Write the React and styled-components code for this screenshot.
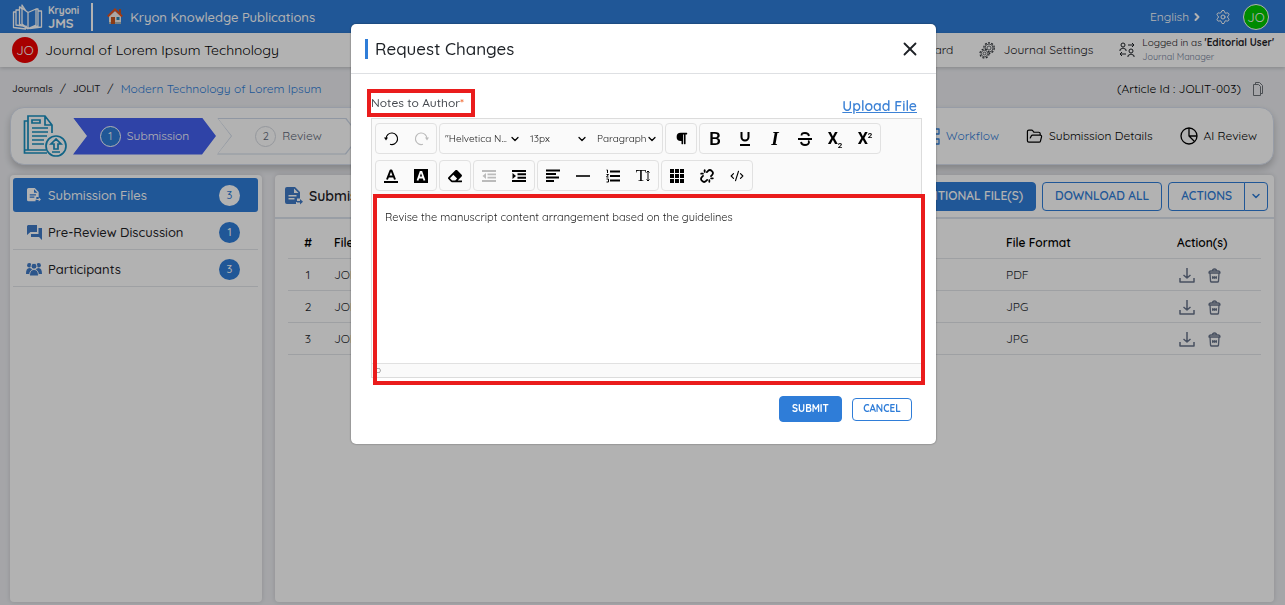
import React from "react";
import styled, { createGlobalStyle, css } from "styled-components";
import { ChevronDown, ChevronRight, CodeXml, FolderOpen, Settings, X, Unlink } from "lucide-react";
import { FaParagraph, FaEraser } from "react-icons/fa";

const blue = "#2f7dd8";
const red = "#ea1c1c";
const line = "#e3e5ea";

const Global = createGlobalStyle`
  * { box-sizing: border-box; }
  body { margin: 0; font-family: Quicksand, Lato, "Open Sans", sans-serif; font-size: 12px; line-height: 16px; color: #1d2126; background: #ecedf1; }
  button, select, textarea, input { font: inherit; color: inherit; }
  button { cursor: pointer; }
  a { color: inherit; text-decoration: none; }
  h1, h2, p { margin: 0; }
  svg { display: block; flex: none; }
`;

const Page = styled.div`
  min-height: 100vh;
  display: flex;
  flex-direction: column;
`;
const TopBar = styled.header`
  height: 33px;
  padding: 0 16px 0 12px;
  display: flex;
  align-items: center;
  background: ${blue};
  color: #fff;
`;
const Brand = styled.a`
  display: flex;
  align-items: center;
  gap: 4px;
  padding-right: 12px;
  border-right: 2px solid #fff;
  font-weight: 700;
`;
const BrandText = styled.span`
  display: flex;
  flex-direction: column;
  font-size: 13px;
  line-height: 12px;
`;
const BrandSmall = styled.span`
  font-size: 10px;
`;
const Publisher = styled.a`
  display: flex;
  align-items: center;
  gap: 7px;
  margin-left: 14px;
  font-size: 13px;
  font-weight: 500;
`;
const Push = styled.div`
  margin-left: auto;
  display: flex;
  align-items: center;
  gap: ${(p) => p.$gap}px;
`;
const PlainButton = styled.button`
  display: flex;
  align-items: center;
  gap: 2px;
  padding: 0;
  border: 0;
  background: none;
`;
const Avatar = styled.span`
  width: 26px;
  height: 26px;
  border-radius: 50%;
  display: grid;
  place-items: center;
  background: ${(p) => p.$color};
  border: ${(p) => (p.$ring ? "1px solid #fff" : "0")};
  color: #fff;
  font-size: 13px;
`;
const JournalBar = styled.div`
  height: 34px;
  padding: 0 11px 0 12px;
  display: flex;
  align-items: center;
  gap: 7px;
  background: #fff;
  box-shadow: 0 1px 4px rgba(0, 0, 0, 0.2);
`;
const JournalName = styled.h1`
  font-size: 14px;
  font-weight: 400;
  color: #000;
`;
const TopLink = styled.a`
  display: flex;
  align-items: center;
  gap: 7px;
`;
const UserText = styled.span`
  display: flex;
  flex-direction: column;
  font-size: 10px;
  line-height: 14px;
`;
const Role = styled.span`
  font-size: 9px;
  color: #74809a;
`;
const Crumbs = styled.nav`
  height: 40px;
  padding: 4px 22px 0 12px;
  display: flex;
  align-items: center;
  gap: 7px;
`;
const Crumb = styled.a`
  font-size: ${(p) => (p.$current ? 12 : 10)}px;
  font-weight: ${(p) => (p.$current ? 400 : 500)};
  color: ${(p) => (p.$current ? blue : "inherit")};
`;
const ArticleId = styled.span`
  color: #000;
`;
const Faint = styled.span`
  color: #6d7178;
`;
const Stepper = styled.section`
  margin: 0 11px 10px 10px;
  height: 58px;
  padding: 0 16px 0 12px;
  display: flex;
  align-items: center;
  border-radius: 14px;
  border: 1px solid #d8e0ee;
  background: #fff;
  box-shadow: 0 4px 7px rgba(0, 0, 0, 0.2);
`;
const Steps = styled.div`
  display: flex;
  gap: 1px;
  margin-left: 6px;
`;
const arrow = "polygon(0 0, calc(100% - 14px) 0, 100% 50%, calc(100% - 14px) 100%, 0 100%, 14px 50%)";
const Step = styled.button`
  position: relative;
  z-index: 0;
  width: 143px;
  height: 37px;
  border: 0;
  padding: 0;
  display: flex;
  align-items: center;
  justify-content: center;
  gap: 6px;
  clip-path: ${arrow};
  background: ${(p) => (p.$active ? "#4460f0" : "#cfd9e8")};
  color: ${(p) => (p.$active ? "#fff" : "#5d6778")};
  &::before {
    content: "";
    position: absolute;
    z-index: -1;
    inset: 1px;
    clip-path: ${arrow};
    background: ${(p) => (p.$active ? "#4460f0" : "#fff")};
  }
`;
const StepNumber = styled.span`
  width: 21px;
  height: 21px;
  display: grid;
  place-items: center;
  border-radius: 50%;
  border: 1px solid ${(p) => (p.$active ? "#fff" : "#d5d9e0")};
  background: ${(p) => (p.$active ? blue : "#fff")};
  font-size: 11px;
`;
const TabLink = styled.a`
  display: flex;
  align-items: center;
  gap: 6px;
  color: ${(p) => (p.$active ? blue : "#000")};
`;
const Columns = styled.main`
  flex: 1;
  display: flex;
  gap: 13px;
  padding: 0 11px 3px 10px;
`;
const Panel = styled.section`
  background: #fff;
  border-radius: 4px;
  box-shadow: 0 0 5px rgba(0, 0, 0, 0.14);
`;
const Sidebar = styled(Panel)`
  width: 252px;
  padding: 3px 4px 3px 3px;
`;
const Content = styled(Panel)`
  flex: 1;
`;
const SideLink = styled.a`
  height: 37px;
  padding: 2px 18px 0 13px;
  display: flex;
  align-items: center;
  gap: 6px;
  font-size: 13px;
  font-weight: 500;
  border-bottom: 1px solid ${line};
  ${(p) => p.$active && css`
    height: 34px;
    margin-bottom: 1px;
    padding-top: 0;
    background: ${blue};
    color: #fff;
    border: 0;
    border-radius: 3px;
  `}
`;
const SideIcon = styled.span`
  width: 16px;
  display: grid;
  place-items: center;
  color: ${(p) => (p.$active ? "#fff" : "#3f7ac6")};
`;
const Count = styled.span`
  margin-left: auto;
  width: 21px;
  height: 21px;
  border-radius: 50%;
  display: grid;
  place-items: center;
  font-size: 11px;
  background: ${(p) => (p.$active ? "#fff" : blue)};
  color: ${(p) => (p.$active ? blue : "#fff")};
`;
const ContentHead = styled.div`
  height: 44px;
  padding: 0 6px 0 10px;
  display: flex;
  align-items: center;
  gap: 8px;
  border-bottom: 2px solid #dbe2ec;
`;
const ContentTitle = styled.h2`
  font-size: 14px;
  font-weight: 600;
`;
const ActionButton = styled.button`
  height: 29px;
  padding: 0 12px;
  border: 1px solid ${blue};
  border-radius: 4px;
  background: ${(p) => (p.$solid ? blue : "#fff")};
  color: ${(p) => (p.$solid ? "#fff" : blue)};
  font-weight: 600;
`;
const Split = styled.div`
  display: flex;
  ${ActionButton}:first-child { border-radius: 4px 0 0 4px; }
  ${ActionButton}:last-child { border-radius: 0 4px 4px 0; padding: 0 5px; margin-left: -1px; }
`;
const TableWrap = styled.div`
  padding: 7px 13px;
`;
const Table = styled.table`
  width: 100%;
  table-layout: fixed;
  border-collapse: collapse;
  color: #22262b;
  th { height: 32px; padding: 2px 0 0; text-align: left; color: #000; font-weight: 600; border-bottom: 1px solid ${line}; }
  td { height: 32px; padding: 2px 0 0; border-bottom: 1px solid ${line}; }
  th:first-child, td:first-child { width: 46px; text-align: center; padding-right: 6px; }
  th:nth-child(3) { width: 171px; }
  th:nth-child(4) { width: 84px; }
`;
const RowActions = styled.div`
  display: flex;
  gap: 13px;
  padding-left: 2px;
  color: #68748b;
`;

const Overlay = styled.div`
  position: fixed;
  inset: 0;
  padding: 24px 0;
  display: flex;
  align-items: flex-start;
  justify-content: center;
  background: rgba(0, 0, 0, 0.3);
`;
const Dialog = styled.div`
  width: 585px;
  max-width: 96%;
  margin-left: 2px;
  border-radius: 5px;
  background: #fff;
  box-shadow: 0 0 2px rgba(0, 0, 0, 0.5);
`;
const DialogHead = styled.div`
  height: 50px;
  padding: 0 15px 0 14px;
  display: flex;
  align-items: center;
  justify-content: space-between;
  border-bottom: 1px solid #dee0e3;
`;
const DialogTitle = styled.h2`
  padding-left: 7px;
  border-left: 3px solid ${blue};
  font-size: 17px;
  line-height: 20px;
  font-weight: 500;
`;
const DialogBody = styled.div`
  padding: 19px 14px 22px 20px;
`;
const LabelRow = styled.div`
  height: 25px;
  display: flex;
  justify-content: space-between;
  padding-right: 5px;
`;
const FieldLabel = styled.label`
  position: relative;
  height: 20px;
  line-height: 20px;
  font-weight: 500;
  color: #44484e;
  &::after {
    content: "";
    position: absolute;
    inset: -4px -11px -4px -4px;
    border: 4px solid ${red};
  }
`;
const Required = styled.span`
  color: #f2672e;
`;
const UploadLink = styled.a`
  align-self: flex-end;
  line-height: 24px;
  font-size: 14px;
  font-weight: 600;
  color: #3c82d6;
  text-decoration: underline;
`;
const Editor = styled.div`
  border: 1px solid #dcdcdc;
`;
const Toolbar = styled.div`
  padding: 4px 3px;
  display: flex;
  flex-direction: column;
  gap: 6px;
  background: #fafafa;
`;
const ToolRow = styled.div`
  display: flex;
  gap: 2px;
`;
const ToolGroup = styled.div`
  height: 31px;
  display: flex;
  border: 1px solid #e1e1e1;
  border-radius: 4px;
`;
const Tool = styled.button`
  width: 30px;
  padding: 0;
  border: 0;
  background: none;
  display: grid;
  place-items: center;
  color: ${(p) => (p.$off ? "#bbb" : "#000")};
`;
const Glyph = styled.span`
  font-family: ${(p) => (p.$serif ? '"Liberation Serif", serif' : "Roboto, sans-serif")};
  font-size: ${(p) => p.$size || 18}px;
  line-height: 20px;
  font-weight: ${(p) => p.$weight || 500};
  font-style: ${(p) => (p.$italic ? "italic" : "normal")};
  sub, sup { font-size: 8px; line-height: 0; }
`;
const Picker = styled.span`
  width: ${(p) => p.$width}px;
  padding-right: 4px;
  display: flex;
  align-items: center;
  font-size: 10px;
  color: #222;
  select {
    flex: 1;
    min-width: 0;
    height: 100%;
    padding: 0 0 0 5px;
    border: 0;
    background: none;
    appearance: none;
  }
`;
const Writing = styled.div`
  position: relative;
  &::after {
    content: "";
    position: absolute;
    inset: -1px -4px -8px 1px;
    border: 4px solid ${red};
    pointer-events: none;
  }
`;
const TextArea = styled.textarea`
  display: block;
  width: 100%;
  height: 168px;
  padding: 14px 13px;
  border: 0;
  resize: none;
  outline: 0;
  font-size: 11px;
  line-height: 16px;
  color: #222;
`;
const StatusBar = styled.div`
  height: 14px;
  padding-left: 3px;
  border-top: 1px solid #e1e1e1;
  background: #fafafa;
  font-size: 10px;
  line-height: 12px;
  color: #777;
`;
const DialogActions = styled.div`
  margin: 18px 10px 0 0;
  display: flex;
  justify-content: flex-end;
  align-items: center;
  gap: 10px;
`;
const DialogButton = styled.button`
  height: ${(p) => (p.$solid ? 26 : 23)}px;
  width: ${(p) => (p.$solid ? 63 : 60)}px;
  padding: 0;
  border: 1px solid ${blue};
  border-radius: 4px;
  background: ${(p) => (p.$solid ? blue : "#fff")};
  color: ${(p) => (p.$solid ? "#fff" : blue)};
  font-size: 10px;
  font-weight: 700;
`;

const Svg = ({ w = 16, h = w, box = `0 0 ${w} ${h}`, sw = 1, children }) => (
  <svg width={w} height={h} viewBox={box} fill="none" stroke="currentColor" strokeWidth={sw} strokeLinejoin="round" aria-hidden="true">{children}</svg>
);
const BookLogo = () => (
  <Svg w={32} h={28} sw={1.3}>
    <path d="M10 21V5l6 4.500v16l-6-4.500Zm6 4.500 8-3.500V6l-8 3.500M10 6l-2-2-.5 0v17l8.500 5M8 7H4v15l11 1.500M24 6h2v17l-10 2.500M26 8h3.500v16l-12 1.500M4 9H1.500v15.500L14 26M14 8l-4-6v4" />
  </Svg>
);
const House = () => (
  <svg width="16" height="17" viewBox="0 0 16 17" aria-hidden="true">
    <path d="M2 8 8 3l6 5v8H2Z" fill="#f5eee8" />
    <path d="M2 14h12v2H2Z" fill="#a9b8bb" />
    <path d="M4 9h4v7H4Z" fill="#c8551d" />
    <path d="M9.500 9h3v3h-3Z" fill="#2687b9" />
    <path d="M12 1h2v5h-2Z" fill="#c8551d" />
    <path d="m.8 8.500 7.200-7 7.200 7" fill="none" stroke="#e4521c" strokeWidth="2" />
  </svg>
);
const DocUpload = () => (
  <svg width="44" height="44" viewBox="0 0 44 44" fill="none" stroke="#1990c0" strokeWidth="1.700" aria-hidden="true">
    <path d="M5 36H1.500V7H5M29 19v-8l-7-9H5v34h18M22 2v9h7M1.500 36v3H24M9 6h8v3H9ZM9 14h16M9 18h16M9 22h15M9 26h12M9 30h12" />
    <circle cx="33" cy="32" r="10" fill="#fff" />
    <path d="m33 25-5 5h3v5h4v-5h3ZM29 38h8" />
  </svg>
);
const FileArrow = ({ size }) => (
  <svg width={size} height={size} viewBox="0 0 18 18" fill="currentColor" aria-hidden="true">
    <path fillRule="evenodd" d="M2 0h8l5 5v6.500h-3V15h-1v2H2a2 2 0 0 1-2-2V2a2 2 0 0 1 2-2Zm7 1.500V6h4.500ZM3.500 8v1.500h8V8Zm0 3v1.500h6V11Z" />
    <path d="M12 14h3v-2l3 2.800-3 2.700v-2h-3Z" />
  </svg>
);
const Chats = () => (
  <svg width="15" height="15" viewBox="0 0 15 15" fill="currentColor" aria-hidden="true">
    <path d="M1 0h9v7H3.500L0 10V1ZM11.500 3H15v12l-3-3H4V9h7.500Z" />
  </svg>
);
const People = () => (
  <svg width="16" height="14" viewBox="0 0 16 14" fill="currentColor" aria-hidden="true">
    <circle cx="3.300" cy="3.200" r="2.200" /><circle cx="12.700" cy="3.200" r="2.200" />
    <path d="M0 12c0-4 1-6 3.500-6S7 8 7 12ZM16 12c0-4-1-6-3.500-6S9 8 9 12Z" />
    <g stroke="#fff" strokeWidth="1">
      <path d="M3.500 14c0-4 1.500-6.500 4.500-6.500s4.500 2.500 4.500 6.500Z" /><circle cx="8" cy="4.200" r="3" />
    </g>
  </svg>
);
const Gears = () => (
  <svg width="17" height="17" viewBox="0 0 34 34" fill="none" stroke="#34383d" strokeWidth="1.500" aria-hidden="true">
    <circle cx="20" cy="12" r="10.500" strokeWidth="2.500" strokeDasharray="4 2.600" />
    <circle cx="20" cy="12" r="8" />
    <circle cx="20" cy="12" r="4" />
    <circle cx="11" cy="23" r="9" fill="#fff" strokeWidth="2.500" strokeDasharray="4 3.070" />
    <circle cx="11" cy="23" r="6.500" fill="#fff" />
    <circle cx="11" cy="23" r="2.800" />
  </svg>
);
const Swap = () => (
  <Svg w={16}>
    <circle cx="4" cy="3" r="2" /><path d="M1 9V7.500Q4 4.500 7 7.500V9M9 3h6m-2-2 2 2-2 2" />
    <circle cx="12" cy="9" r="2" /><path d="M9 15v-1.500q3-3 6 0V15M7 12H1m2-2-2 2 2 2" />
  </Svg>
);
const Copy = () => (
  <Svg w={10} h={14}><path d="M2.500 2V.5h4l3 3v8H8M.5 2.500h5l2 2v9h-7Z" /></Svg>
);
const Pie = () => (
  <Svg w={18} sw={1.3}><circle cx="9" cy="9" r="8" /><path d="M9 1v8h8M9 9l5.500 5.500" /></Svg>
);
const Flow = () => (
  <Svg w={17} sw={1.3}><path d="M1 1h5v5H1ZM11 1h5v5h-5ZM11 11h5v5h-5ZM6 3.500h5M3.500 6v7.500H11" /></Svg>
);
const Download = () => (
  <Svg w={16} h={15} sw={1.5}><path d="M8 0v10M4.500 7 8 10l3.500-3M1 10v4h14v-4" /></Svg>
);
const Trash = () => (
  <Svg w={13} h={15} sw={1.3}><path d="M1 5q0-2 2-2h7q2 0 2 2ZM4.500 3q0-2 2-2t2 2M2 5l.5 8q.2 1 1 1h6q.8 0 1-1L11 5M4 9.500h5" /><path strokeWidth="2.600" strokeDasharray="1.300 .5" d="M4 9.500h5" /></Svg>
);
const Turn = ({ flip }) => (
  <svg width="15" height="15" viewBox="0 0 15 15" fill="none" stroke="currentColor" strokeWidth="1.200" aria-hidden="true">
    <g transform={flip ? "matrix(-1 0 0 1 15 0)" : undefined}>
      <path d="M2 8a5.800 5.800 0 1 1 4 5.300" /><path d="M0 6.500h4L2 9.500Z" fill="currentColor" stroke="none" />
    </g>
  </svg>
);
const Lines = ({ d, sw = 2, children }) => <Svg w={14} sw={sw}><path d={d} />{children}</Svg>;
const TextColor = () => (
  <Svg w={14} sw={2}><path d="M0 13h14M3 10.500 6.500 1.500h1l3.500 9M4.500 7.500h5" /></Svg>
);
const FillColor = () => (
  <svg width="14" height="14" viewBox="0 0 14 14" fill="none" aria-hidden="true">
    <path d="M0 0h14v14H0Z" fill="#000" /><path d="m3.500 11.500 3-8.500h1l3 8.500M5 8.500h4" stroke="#fff" strokeWidth="1.800" />
  </svg>
);
const Grid = () => (
  <svg width="14" height="14" viewBox="0 0 14 14" fill="currentColor" aria-hidden="true">
    {[0, 5, 10].map((x) => [0, 5, 10].map((y) => <rect key={`${x}-${y}`} x={x} y={y} width="4" height="4" />))}
  </svg>
);
const UpDown = () => (
  <Svg w={4} h={12}><path d="M2 1v10M.5 2.500 2 1l1.500 1.500M.5 9.500 2 11l1.500-1.500" /></Svg>
);
const LineHeight = styled.span`
  display: flex;
  align-items: center;
`;

const steps = ["Submission", "Review", "Copyediting", "Production"];
const sideItems = [
  ["Submission Files", 3, <FileArrow size={14} />],
  ["Pre-Review Discussion", 1, <Chats />],
  ["Participants", 3, <People />],
];
const files = ["PDF", "JPG", "JPG"];

const PickerField = ({ label, value, width }) => (
  <Picker $width={width}>
    <select aria-label={label} defaultValue={value}><option>{value}</option></select>
    <ChevronDown size={12} color="#000" strokeWidth={2.5} />
  </Picker>
);
const ToolItem = ({ label, off, children }) => (
  <Tool type="button" aria-label={label} disabled={off} $off={off}>{children}</Tool>
);

export default function App() {
  return (
    <>
      <Global />
      <Page>
        <TopBar>
          <Brand href="#">
            <BookLogo />
            <BrandText><BrandSmall>Kryoni</BrandSmall>JMS</BrandText>
          </Brand>
          <Publisher href="#"><House />Kryon Knowledge Publications</Publisher>
          <Push $gap={12}>
            <PlainButton type="button">English <ChevronRight size={12} strokeWidth={4} /></PlainButton>
            <PlainButton type="button" aria-label="Settings"><Settings size={16} strokeWidth={1.5} /></PlainButton>
            <Avatar $color="#00c800" $ring>JO</Avatar>
          </Push>
        </TopBar>
        <JournalBar>
          <Avatar $color="#f00000">JO</Avatar>
          <JournalName>Journal of Lorem Ipsum Technology</JournalName>
          <Push $gap={26}>
            <TopLink href="#">Dashboard</TopLink>
            <TopLink href="#"><Gears />Journal Settings</TopLink>
            <TopLink href="#">
              <Swap />
              <UserText><span>Logged in as <b>'Editorial User'</b></span><Role>Journal Manager</Role></UserText>
            </TopLink>
          </Push>
        </JournalBar>
        <Crumbs aria-label="Breadcrumb">
          <Crumb href="#">Journals</Crumb><span>/</span><Crumb href="#">JOLIT</Crumb><span>/</span>
          <Crumb href="#" $current>Modern Technology of Lorem Ipsum</Crumb>
          <Push $gap={12}><ArticleId>(Article Id : JOLIT-003)</ArticleId><Faint><Copy /></Faint></Push>
        </Crumbs>
        <Stepper>
          <DocUpload />
          <Steps>
            {steps.map((name, i) => (
              <Step key={name} type="button" $active={i === 0}>
                <StepNumber $active={i === 0}>{i + 1}</StepNumber>{name}
              </Step>
            ))}
          </Steps>
          <Push $gap={27}>
            <TabLink href="#" $active><Flow />Workflow</TabLink>
            <TabLink href="#"><FolderOpen size={17} strokeWidth={1.7} />Submission Details</TabLink>
            <TabLink href="#"><Pie />AI Review</TabLink>
          </Push>
        </Stepper>
        <Columns>
          <Sidebar as="nav" aria-label="Submission">
            {sideItems.map(([name, count, icon], i) => (
              <SideLink key={name} href="#" $active={i === 0}>
                <SideIcon $active={i === 0}>{icon}</SideIcon>{name}<Count $active={i === 0}>{count}</Count>
              </SideLink>
            ))}
          </Sidebar>
          <Content>
            <ContentHead>
              <SideIcon><FileArrow size={18} /></SideIcon>
              <ContentTitle>Submission Files</ContentTitle>
              <Push $gap={6}>
                <ActionButton type="button" $solid>ADDITIONAL FILE(S)</ActionButton>
                <ActionButton type="button">DOWNLOAD ALL</ActionButton>
                <Split>
                  <ActionButton type="button">ACTIONS</ActionButton>
                  <ActionButton type="button" aria-label="More actions"><ChevronDown size={12} strokeWidth={3} /></ActionButton>
                </Split>
              </Push>
            </ContentHead>
            <TableWrap>
              <Table>
                <thead><tr><th>#</th><th>File Name</th><th>File Format</th><th>Action(s)</th></tr></thead>
                <tbody>
                  {files.map((format, i) => (
                    <tr key={i}>
                      <td>{i + 1}</td><td>JOLIT-003</td><td>{format}</td>
                      <td>
                        <RowActions>
                          <PlainButton type="button" aria-label="Download"><Download /></PlainButton>
                          <PlainButton type="button" aria-label="Delete"><Trash /></PlainButton>
                        </RowActions>
                      </td>
                    </tr>
                  ))}
                </tbody>
              </Table>
            </TableWrap>
          </Content>
        </Columns>
      </Page>
      <Overlay>
        <Dialog role="dialog" aria-modal="true" aria-labelledby="dialog-title">
          <DialogHead>
            <DialogTitle id="dialog-title">Request Changes</DialogTitle>
            <PlainButton type="button" aria-label="Close"><X size={22} /></PlainButton>
          </DialogHead>
          <DialogBody>
            <LabelRow>
              <FieldLabel htmlFor="notes">Notes to Author<Required>*</Required></FieldLabel>
              <UploadLink href="#">Upload File</UploadLink>
            </LabelRow>
            <Editor>
              <Toolbar role="toolbar" aria-label="Formatting">
                <ToolRow>
                  <ToolGroup>
                    <ToolItem label="Undo"><Turn /></ToolItem>
                    <ToolItem label="Redo" off><Turn flip /></ToolItem>
                  </ToolGroup>
                  <ToolGroup>
                    <PickerField label="Font" value={'"Helvetica N...'} width={85} />
                    <PickerField label="Size" value="13px" width={67} />
                    <PickerField label="Format" value="Paragraph" width={70} />
                  </ToolGroup>
                  <ToolGroup><ToolItem label="Paragraph style"><FaParagraph size={13} /></ToolItem></ToolGroup>
                  <ToolGroup>
                    <ToolItem label="Bold"><Glyph $size={19}>B</Glyph></ToolItem>
                    <ToolItem label="Underline"><Lines d="M3.500 0v5a3.500 3.500 0 0 0 7 0V0M2 13h10" /></ToolItem>
                    <ToolItem label="Italic"><Glyph $serif $italic $weight={700} $size={19}>I</Glyph></ToolItem>
                    <ToolItem label="Strike"><Lines d="M11 4Q10.500 1 7 1 3.500 1 3.500 3.500M3 10q.5 3 4 3t4-2.700q0-1-.7-1.800M0 7h14" sw={1.8} /></ToolItem>
                    <ToolItem label="Subscript"><Glyph $size={16} $weight={700}>X<sub>2</sub></Glyph></ToolItem>
                    <ToolItem label="Superscript"><Glyph $size={16} $weight={700}>X<sup>2</sup></Glyph></ToolItem>
                  </ToolGroup>
                </ToolRow>
                <ToolRow>
                  <ToolGroup>
                    <ToolItem label="Font colour"><TextColor /></ToolItem>
                    <ToolItem label="Highlight colour"><FillColor /></ToolItem>
                  </ToolGroup>
                  <ToolGroup><ToolItem label="Remove format"><FaEraser size={14} /></ToolItem></ToolGroup>
                  <ToolGroup>
                    <ToolItem label="Outdent" off><Lines d="M0 2h14M5.500 5.300H14M5.500 8.700H14M0 12h14" sw={1.8}><path stroke="none" fill="currentColor" d="M4 4v6L.5 7Z" /></Lines></ToolItem>
                    <ToolItem label="Indent"><Lines d="M0 2h14M5.500 5.300H14M5.500 8.700H14M0 12h14" sw={2}><path stroke="none" fill="currentColor" d="M.5 4v6L4 7Z" /></Lines></ToolItem>
                  </ToolGroup>
                  <ToolGroup>
                    <ToolItem label="Align"><Lines d="M0 1.500h14M0 5h10M0 8.500h13M0 12h8" sw={1.8} /></ToolItem>
                    <ToolItem label="Horizontal line"><Lines d="M0 7h14" sw={1.6} /></ToolItem>
                    <ToolItem label="List">
                      <Lines d="M4 2.500h10M4 7h10M4 11.500h10"><path strokeWidth="1" d="M.5 1h1v3M.5 5.500h2L.5 8h2M.5 10h2v3h-2" /></Lines>
                    </ToolItem>
                    <ToolItem label="Line height"><LineHeight><Glyph $serif $size={17}>T</Glyph><UpDown /></LineHeight></ToolItem>
                  </ToolGroup>
                  <ToolGroup>
                    <ToolItem label="Table"><Grid /></ToolItem>
                    <ToolItem label="Link"><Unlink size={14} strokeWidth={3} /></ToolItem>
                    <ToolItem label="Code view"><CodeXml size={14} /></ToolItem>
                  </ToolGroup>
                </ToolRow>
              </Toolbar>
              <Writing>
                <TextArea id="notes" defaultValue="Revise the manuscript content arrangement based on the guidelines" />
                <StatusBar>p</StatusBar>
              </Writing>
            </Editor>
            <DialogActions>
              <DialogButton type="button" $solid>SUBMIT</DialogButton>
              <DialogButton type="button">CANCEL</DialogButton>
            </DialogActions>
          </DialogBody>
        </Dialog>
      </Overlay>
    </>
  );
}
